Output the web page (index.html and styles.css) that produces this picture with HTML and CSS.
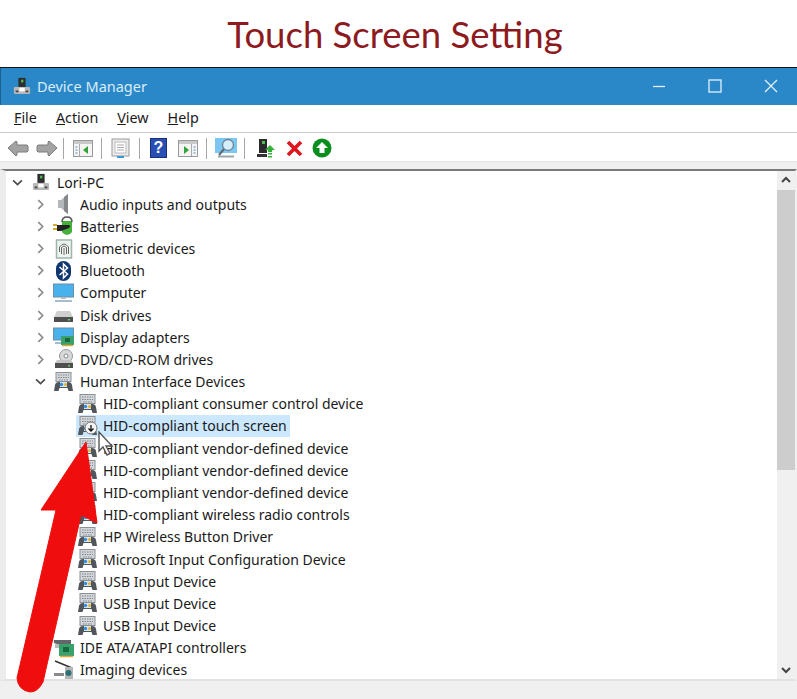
FILE: index.html
```html
<!DOCTYPE html>
<html lang="en">

<head>
    <meta charset="UTF-8">
    <title>Touch Screen Setting</title>
    <link rel="stylesheet" href="styles.css">
</head>

<body>
    <svg class="defs" width="0" height="0">
        <defs>
            <symbol id="pc" viewBox="0 0 20 20">
                <rect x="6" y="1" width="8" height="10" fill="#2d2d2d"/>
                <rect x="9" y="3" width="2.500" height="3" fill="#4fc04f"/>
                <path d="M2 11h16l1 1v6l-1 1H2l-1-1v-6z" fill="#b8b8b8"/>
                <rect x="7" y="12" width="6" height="4" fill="#fff"/>
                <rect x="3" y="15" width="3" height="2" fill="#444"/>
                <rect x="14" y="15" width="3" height="2" fill="#444"/>
            </symbol>
            <symbol id="hid" viewBox="0 0 21 20">
                <rect x="3" y=".5" width="15" height="9" fill="#d3d7db" stroke="#8b9094"/>
                <path d="M5 3h11M5 5.500h11M6 8h9" stroke="#7f858a" stroke-dasharray="1.500 1"/>
                <path d="M1 19l1-6q.5-3 4-3h9q3.500 0 4 3l1 6h-4.500l-1-3h-8l-1 3z" fill="#50565c"/>
                <path d="M7 10h7v5H7z" fill="#dbe6ee"/>
                <circle cx="8.500" cy="12.500" r="1.700" fill="#2f8fdc"/>
                <circle cx="12.500" cy="12.500" r="1.500" fill="#e3b22f"/>
            </symbol>
            <symbol id="chip" viewBox="0 0 21 20">
                <path d="M1 2h17v4H4l-3-1z" fill="#62676b"/>
                <rect x="2" y="6" width="5" height="4" fill="#b9bcbe"/>
                <rect x="6" y="6" width="15" height="12" fill="#3aa06c"/>
                <rect x="10" y="9" width="6" height="5" fill="#15693c"/>
                <path d="M7 18.500h13" stroke="#e2a93a" stroke-width="1.500"/>
            </symbol>
        </defs>
    </svg>

    <h1 class="page-title">Touch Screen Setting</h1>

    <main class="window">
        <header class="titlebar">
            <svg class="app-icon" width="18" height="20"><use href="#pc"/></svg>
            <span class="app-name">Device Manager</span>
            <div class="win-btns">
                <svg width="14" height="14" viewBox="0 0 14 14"><path d="M1 7.500h12" stroke="#e4f1fa" stroke-width="1.300"/></svg>
                <svg width="14" height="14" viewBox="0 0 14 14"><rect x="1" y="1" width="12" height="12" fill="none" stroke="#e4f1fa" stroke-width="1.300"/></svg>
                <svg width="14" height="14" viewBox="0 0 14 14"><path d="M1 1l12 12M13 1L1 13" stroke="#e4f1fa" stroke-width="1.300"/></svg>
            </div>
        </header>

        <nav class="menubar">
            <span><u>F</u>ile</span>
            <span><u>A</u>ction</span>
            <span><u>V</u>iew</span>
            <span><u>H</u>elp</span>
        </nav>

        <div class="toolbar">
            <button class="tool"><svg width="22" height="18" viewBox="0 0 22 18"><path d="M1 9l8-7 1 1v3h10l1 1v5l-1 1H10v3l-1 1z" fill="#a3a3a3" stroke="#7d7d7d"/></svg></button>
            <button class="tool"><svg width="22" height="18" viewBox="0 0 22 18"><path d="M21 9l-8-7-1 1v3H2L1 7v5l1 1h10v3l1 1z" fill="#a3a3a3" stroke="#7d7d7d"/></svg></button>
            <i class="sep sep-first"></i>
            <button class="tool"><svg width="20" height="17" viewBox="0 0 20 17"><rect x=".5" y=".5" width="19" height="16" fill="#f4f4f4" stroke="#999"/><rect x="1" y="1" width="18" height="3" fill="#c9c9c9"/><rect x="6" y="4" width="1" height="12" fill="#aaa"/><path d="M2.500 7h2M2.500 10h2M2.500 13h2" stroke="#4a8fc4"/><path d="M15 6v8l-5-4z" fill="#35a235"/></svg></button>
            <i class="sep"></i>
            <button class="tool"><svg width="19" height="21" viewBox="0 0 19 21"><rect x="1" y="1" width="17" height="17" fill="#ececec" stroke="#999"/><rect x="4" y="4" width="11" height="11" fill="#fff" stroke="#bbb"/><path d="M6 7h7M6 9.500h7M6 12h7" stroke="#aaa"/><path d="M6 19h7" stroke="#3a9bdc" stroke-width="2"/></svg></button>
            <i class="sep"></i>
            <button class="tool"><span class="help-icon">?</span></button>
            <button class="tool"><svg width="20" height="17" viewBox="0 0 20 17"><rect x=".5" y=".5" width="19" height="16" fill="#f4f4f4" stroke="#999"/><rect x="1" y="1" width="18" height="3" fill="#c9c9c9"/><rect x="13" y="4" width="1" height="12" fill="#aaa"/><path d="M15.500 7h2M15.500 10h2M15.500 13h2" stroke="#4a8fc4"/><path d="M6 6v8l5-4z" fill="#35a235"/></svg></button>
            <i class="sep"></i>
            <button class="tool"><svg width="22" height="20" viewBox="0 0 22 20"><rect x="0" y="0" width="22" height="15" fill="#7cc6f2"/><path d="M3 18.500h16" stroke="#9aa5ad" stroke-width="2"/><circle cx="13" cy="7" r="5.500" fill="#d6eefb" stroke="#6f8290" stroke-width="1.300"/><path d="M9 11l-5 6" stroke="#5f6972" stroke-width="2"/></svg></button>
            <i class="sep"></i>
            <button class="tool tool-narrow tool-gap"><svg width="18" height="20" viewBox="0 0 18 20"><rect x="2" y="1" width="8" height="14" fill="#2b2b2b"/><rect x="5" y="3" width="3" height="3" fill="#4fc04f"/><path d="M0 16h10v3H0z" fill="#333"/><path d="M13 7l5 5h-3v2h-4v-2H8z" fill="#35b13a"/><path d="M11 15h4v1.500h-4zM11 18h4v1.500h-4z" fill="#35b13a"/></svg></button>
            <button class="tool tool-narrow"><svg width="17" height="17" viewBox="0 0 17 17"><path d="M2 2l13 13M15 2L2 15" stroke="#e0141c" stroke-width="3.600"/></svg></button>
            <button class="tool tool-narrow"><svg width="20" height="20" viewBox="0 0 20 20"><circle cx="10" cy="10" r="9.500" fill="#0a8f1f"/><path d="M10 4l6 6h-3.500v5h-5v-5H4z" fill="#fff"/></svg></button>
        </div>

        <div class="strip"></div>

        <section class="content">
            <div class="tree">
                <div class="row root">
                    <svg class="chev" viewBox="0 0 10 10"><path d="M1 3l4 4 4-4" class="open"/></svg>
                    <svg class="icon" width="18" height="20"><use href="#pc"/></svg>
                    <span>Lori-PC</span>
                </div>
                <div class="row cat">
                    <svg class="chev" viewBox="0 0 10 10"><path d="M3 1l4 4-4 4"/></svg>
                    <svg class="icon" width="21" height="20" viewBox="0 0 21 20"><path d="M5 6h3l7-6v20l-7-6H5z" fill="#b4b7b9"/><path d="M11 3l4-3v20l-4-3z" fill="#85898c"/></svg>
                    <span>Audio inputs and outputs</span>
                </div>
                <div class="row cat">
                    <svg class="chev" viewBox="0 0 10 10"><path d="M3 1l4 4-4 4"/></svg>
                    <svg class="icon" width="21" height="20" viewBox="0 0 21 20"><path d="M9 5h10v11q-2 3-5 3t-5-3z" fill="#45b13a"/><path d="M9 6q0-5 5-5t5 5" fill="none" stroke="#555" stroke-width="1.500"/><path d="M4 9h12q2 1 0 3l-8 3H4z" fill="#222"/><path d="M0 9h4M0 13h4" stroke="#d1a92b" stroke-width="1.800"/></svg>
                    <span>Batteries</span>
                </div>
                <div class="row cat">
                    <svg class="chev" viewBox="0 0 10 10"><path d="M3 1l4 4-4 4"/></svg>
                    <svg class="icon" width="21" height="20" viewBox="0 0 21 20"><rect x="3.500" y="1" width="15" height="18" fill="#eef5f1" stroke="#9db5aa" stroke-width="1.500"/><path d="M6.500 13V8q4.500-6 9 0v7M8.500 15V8.500q2.500-3 5 0V15M11 16V9" fill="none" stroke="#666"/></svg>
                    <span>Biometric devices</span>
                </div>
                <div class="row cat">
                    <svg class="chev" viewBox="0 0 10 10"><path d="M3 1l4 4-4 4"/></svg>
                    <svg class="icon" width="21" height="20" viewBox="0 0 21 20"><rect x="3" y="0" width="15" height="20" rx="7.500" fill="#10386e"/><path d="M6.500 6l8 7-4 4V3l4 4-8 7" fill="none" stroke="#fff" stroke-width="1.500"/></svg>
                    <span>Bluetooth</span>
                </div>
                <div class="row cat">
                    <svg class="chev" viewBox="0 0 10 10"><path d="M3 1l4 4-4 4"/></svg>
                    <svg class="icon" width="21" height="20" viewBox="0 0 21 20"><rect x=".5" y="1" width="20" height="13" fill="#49b2ec" stroke="#6f8ea3"/><path d="M8 14h5v2H8z" fill="#bbb"/><path d="M2 18h17" stroke="#a4bed0" stroke-width="2"/></svg>
                    <span>Computer</span>
                </div>
                <div class="row cat">
                    <svg class="chev" viewBox="0 0 10 10"><path d="M3 1l4 4-4 4"/></svg>
                    <svg class="icon" width="21" height="20" viewBox="0 0 21 20"><path d="M4 6h13l3 6H1z" fill="#cfcfcf"/><rect x="1" y="12" width="19" height="5" fill="#4f4f4f"/><rect x="15" y="14" width="2" height="1.500" fill="#5fd35f"/></svg>
                    <span>Disk drives</span>
                </div>
                <div class="row cat">
                    <svg class="chev" viewBox="0 0 10 10"><path d="M3 1l4 4-4 4"/></svg>
                    <svg class="icon" width="21" height="20" viewBox="0 0 21 20"><rect x=".5" y="1" width="20" height="12" fill="#49b2ec" stroke="#6f8ea3"/><path d="M2 16h7" stroke="#a4bed0" stroke-width="2"/><rect x="8" y="9" width="13" height="9" fill="#3aa06c"/><rect x="12" y="11" width="5" height="4" fill="#15693c"/><path d="M9 18.500h11" stroke="#e2a93a" stroke-width="1.500"/></svg>
                    <span>Display adapters</span>
                </div>
                <div class="row cat">
                    <svg class="chev" viewBox="0 0 10 10"><path d="M3 1l4 4-4 4"/></svg>
                    <svg class="icon" width="21" height="20" viewBox="0 0 21 20"><circle cx="13" cy="7" r="6.500" fill="#d7d9da" stroke="#999"/><circle cx="13" cy="7" r="2" fill="#fff" stroke="#888"/><path d="M4 11h14l2 3H2z" fill="#c4c4c4"/><rect x="2" y="14" width="18" height="5" fill="#4f4f4f"/><rect x="15" y="16" width="2" height="1.500" fill="#5fd35f"/></svg>
                    <span>DVD/CD-ROM drives</span>
                </div>
                <div class="row cat">
                    <svg class="chev" viewBox="0 0 10 10"><path d="M1 3l4 4 4-4" class="open"/></svg>
                    <svg class="icon" width="21" height="20"><use href="#hid"/></svg>
                    <span>Human Interface Devices</span>
                </div>
                <div class="row dev"><svg class="icon" width="21" height="20"><use href="#hid"/></svg><span>HID-compliant consumer control device</span></div>
                <div class="row dev selected">
                    <svg class="icon" width="21" height="20"><use href="#hid"/></svg>
                    <svg class="badge" width="14" height="14" viewBox="0 0 14 14"><circle cx="7" cy="7" r="6" fill="#f4f4f4" stroke="#777"/><path d="M7 4v6M4.500 7.500L7 10l2.500-2.500" fill="none" stroke="#111" stroke-width="1.300"/></svg>
                    <span>HID-compliant touch screen</span>
                </div>
                <div class="row dev"><svg class="icon" width="21" height="20"><use href="#hid"/></svg><span>HID-compliant vendor-defined device</span></div>
                <div class="row dev"><svg class="icon" width="21" height="20"><use href="#hid"/></svg><span>HID-compliant vendor-defined device</span></div>
                <div class="row dev"><svg class="icon" width="21" height="20"><use href="#hid"/></svg><span>HID-compliant vendor-defined device</span></div>
                <div class="row dev"><svg class="icon" width="21" height="20"><use href="#hid"/></svg><span>HID-compliant wireless radio controls</span></div>
                <div class="row dev"><svg class="icon" width="21" height="20"><use href="#hid"/></svg><span>HP Wireless Button Driver</span></div>
                <div class="row dev"><svg class="icon" width="21" height="20"><use href="#hid"/></svg><span>Microsoft Input Configuration Device</span></div>
                <div class="row dev"><svg class="icon" width="21" height="20"><use href="#hid"/></svg><span>USB Input Device</span></div>
                <div class="row dev"><svg class="icon" width="21" height="20"><use href="#hid"/></svg><span>USB Input Device</span></div>
                <div class="row dev"><svg class="icon" width="21" height="20"><use href="#hid"/></svg><span>USB Input Device</span></div>
                <div class="row cat">
                    <svg class="chev" viewBox="0 0 10 10"><path d="M3 1l4 4-4 4"/></svg>
                    <svg class="icon" width="21" height="20"><use href="#chip"/></svg>
                    <span>IDE ATA/ATAPI controllers</span>
                </div>
                <div class="row cat">
                    <svg class="chev" viewBox="0 0 10 10"><path d="M3 1l4 4-4 4"/></svg>
                    <svg class="icon" width="21" height="20" viewBox="0 0 21 20"><path d="M2 1l17 7" stroke="#333" stroke-width="1.500"/><path d="M12 7h8v12h-8z" fill="#b5b5b5"/><circle cx="15.500" cy="13" r="3" fill="#2d6f78"/><path d="M1 13h10v3H1z" fill="#8a8a8a"/></svg>
                    <span>Imaging devices</span>
                </div>
            </div>
            <div class="scrollbar">
                <svg class="sb-arrow" viewBox="0 0 10 10"><path d="M1 7l4-4 4 4"/></svg>
                <div class="thumb"></div>
                <svg class="sb-arrow sb-down" viewBox="0 0 10 10"><path d="M1 3l4 4 4-4"/></svg>
            </div>
        </section>

        <footer class="statusbar"></footer>
    </main>

    <!-- cursor and red arrow lie over the list -->
    <svg class="cursor" width="16" height="26" viewBox="0 0 16 26"><path d="M1 1v19l4-4 4 8 3-1.500-4-7.500h6z" fill="#fff" stroke="#555" stroke-width="1.400"/></svg>
    <svg class="red-arrow" width="100" height="260" viewBox="0 0 100 260"><path d="M86 2L97 83 81 75 43 242Q38 252 30 252 18 250 17 238L56 70H41z" fill="#f00d0d" stroke="#f00d0d" stroke-width="1" stroke-linejoin="round"/></svg>
</body>

</html>
```

FILE: styles.css
```css
* {
    box-sizing: border-box;
}

html, body {
    height: 699px;
}

body {
    margin: 0;
    overflow: hidden;
    background-color: #fff;
    color: #1a1a1a;
    font-family: "Noto Sans", "Liberation Sans", sans-serif;
    font-size: 14px;
    position: relative;
}

.defs {
    position: absolute;
}

.page-title {
    margin: 0;
    height: 67px;
    padding: 9px 7px 0 0;
    font-family: Lato, "Open Sans", sans-serif;
    font-size: 36.500px;
    line-height: 50px;
    font-weight: 400;
    text-align: center;
    color: #8c1a1f;
}

.window {
    width: 797px;
    height: 632px;
    border-top: 1px solid #111;
    display: flex;
    flex-direction: column;
    background-color: #fff;
}

.titlebar {
    height: 37px;
    flex: none;
    background-color: #2b88c8;
    color: #d9ecf8;
    display: flex;
    align-items: center;
    padding: 0 0 1px 12px;
    border-left: 1px solid #1f5f8c;
}

.app-name {
    margin-left: 6px;
    font-size: 14.500px;
}

.win-btns {
    margin-left: auto;
    display: flex;
    gap: 42px;
    padding-right: 19px;
}

.menubar {
    height: 28px;
    flex: none;
    border-bottom: 1px solid #c9c9cc;
    display: flex;
    align-items: center;
    padding: 0 0 2px 14px;
    gap: 19px;
    font-size: 14.300px;
}

.toolbar {
    height: 28px;
    flex: none;
    display: flex;
    align-items: center;
    padding: 2px 0 0 3px;
}

.tool {
    width: 29px;
    height: 24px;
    padding: 0;
    border: none;
    background: none;
    display: flex;
    align-items: center;
    justify-content: center;
}

.tool-narrow {
    width: 28px;
}

.tool-gap {
    margin-left: 3px;
}

.help-icon {
    width: 17px;
    height: 20px;
    background-color: #2a4fb4;
    border: 1px solid #1b2f78;
    color: #fff;
    font-size: 16px;
    font-weight: 700;
    line-height: 18px;
    text-align: center;
}

.sep {
    width: 1px;
    height: 21px;
    margin: 0 4px;
    background-color: #a6a6a6;
}

.sep-first {
    margin-left: 2px;
}

.strip {
    height: 8px;
    flex: none;
    background-color: #f0f0f0;
    border-top: 1px solid #e4e4e4;
}

.content {
    flex: 1;
    min-height: 0;
    display: flex;
    background-color: #fff;
    border-top: 2px solid #7a7a7a;
    border-left: 6px solid #ececec;
    border-right: 2px solid #f0f0f0;
    border-bottom: 2px solid #e2e2e2;
}

.tree {
    flex: 1;
    min-width: 0;
    overflow: hidden;
}

.row {
    height: 22.180px;
    display: flex;
    align-items: center;
    white-space: nowrap;
    position: relative;
}

.root {
    padding-left: 6px;
}

.cat {
    padding-left: 29px;
}

.dev {
    padding-left: 71px;
}

.chev {
    width: 11px;
    height: 11px;
    flex: none;
    margin-right: 7px;
}

.chev path, .sb-arrow path {
    fill: none;
    stroke: #8a8a8a;
    stroke-width: 1.500;
}

.chev .open {
    stroke: #4a4a4a;
}

.icon {
    flex: none;
    margin-right: 6px;
}

.dev .icon {
    margin-right: 5px;
}

.root .icon {
    margin-left: 2px;
    margin-right: 7px;
}

.selected span {
    background-color: #cce8ff;
    margin-left: -5px;
    padding: 0 3px 0 5px;
    line-height: 22px;
}

.selected .icon {
    background-color: #cce8ff;
    box-shadow: 0 0 0 1px #cce8ff;
}

.badge {
    position: absolute;
    left: 78px;
    top: 6px;
}

.scrollbar {
    width: 18px;
    flex: none;
    background-color: #f0f0f0;
    display: flex;
    flex-direction: column;
    align-items: center;
}

.sb-arrow {
    width: 10px;
    height: 10px;
    flex: none;
    margin: 4px 0;
}

.sb-arrow path {
    stroke: #444;
    stroke-width: 2;
}

.sb-down {
    margin-top: auto;
}

.thumb {
    width: 100%;
    height: 280px;
    margin-top: 1px;
    background-color: #cdcdcd;
}

.statusbar {
    flex: none;
    height: 18px;
    background-color: #f0f0f0;
}

.cursor {
    position: absolute;
    left: 98px;
    top: 431px;
}

.red-arrow {
    position: absolute;
    left: 0;
    top: 440px;
}
```
